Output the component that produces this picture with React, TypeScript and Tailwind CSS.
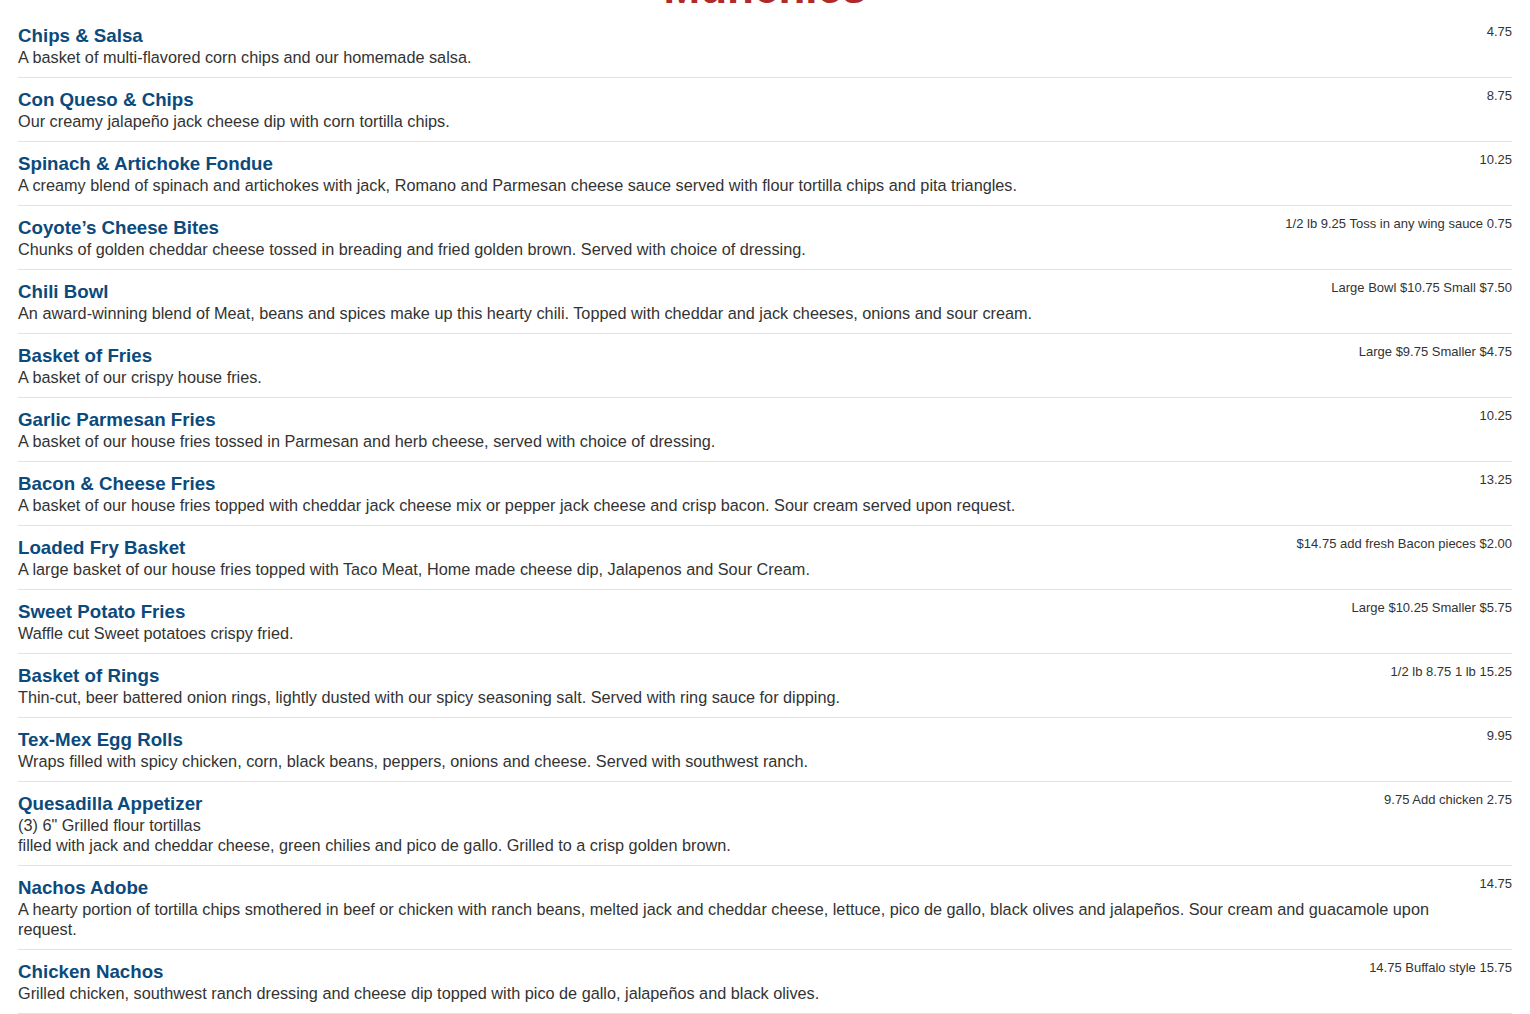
const items: { name: string; desc: string[]; price: string }[] = [
  { name: "Chips & Salsa", desc: ["A basket of multi-flavored corn chips and our homemade salsa."], price: "4.75" },
  { name: "Con Queso & Chips", desc: ["Our creamy jalapeño jack cheese dip with corn tortilla chips."], price: "8.75" },
  { name: "Spinach & Artichoke Fondue", desc: ["A creamy blend of spinach and artichokes with jack, Romano and Parmesan cheese sauce served with flour tortilla chips and pita triangles."], price: "10.25" },
  { name: "Coyote’s Cheese Bites", desc: ["Chunks of golden cheddar cheese tossed in breading and fried golden brown. Served with choice of dressing."], price: "1/2 lb 9.25 Toss in any wing sauce 0.75" },
  { name: "Chili Bowl", desc: ["An award-winning blend of Meat, beans and spices make up this hearty chili. Topped with cheddar and jack cheeses, onions and sour cream."], price: "Large Bowl $10.75 Small $7.50" },
  { name: "Basket of Fries", desc: ["A basket of our crispy house fries."], price: "Large $9.75 Smaller $4.75" },
  { name: "Garlic Parmesan Fries", desc: ["A basket of our house fries tossed in Parmesan and herb cheese, served with choice of dressing."], price: "10.25" },
  { name: "Bacon & Cheese Fries", desc: ["A basket of our house fries topped with cheddar jack cheese mix or pepper jack cheese and crisp bacon. Sour cream served upon request."], price: "13.25" },
  { name: "Loaded Fry Basket", desc: ["A large basket of our house fries topped with Taco Meat, Home made cheese dip, Jalapenos and Sour Cream."], price: "$14.75 add fresh Bacon pieces $2.00" },
  { name: "Sweet Potato Fries", desc: ["Waffle cut Sweet potatoes crispy fried."], price: "Large $10.25 Smaller $5.75" },
  { name: "Basket of Rings", desc: ["Thin-cut, beer battered onion rings, lightly dusted with our spicy seasoning salt. Served with ring sauce for dipping."], price: "1/2 lb 8.75 1 lb 15.25" },
  { name: "Tex-Mex Egg Rolls", desc: ["Wraps filled with spicy chicken, corn, black beans, peppers, onions and cheese. Served with southwest ranch."], price: "9.95" },
  { name: "Quesadilla Appetizer", desc: ["(3) 6\" Grilled flour tortillas", "filled with jack and cheddar cheese, green chilies and pico de gallo. Grilled to a crisp golden brown."], price: "9.75 Add chicken 2.75" },
  { name: "Nachos Adobe", desc: ["A hearty portion of tortilla chips smothered in beef or chicken with ranch beans, melted jack and cheddar cheese, lettuce, pico de gallo, black olives and jalapeños. Sour cream and guacamole upon request."], price: "14.75" },
  { name: "Chicken Nachos", desc: ["Grilled chicken, southwest ranch dressing and cheese dip topped with pico de gallo, jalapeños and black olives."], price: "14.75 Buffalo style 15.75" },
];

export default function App() {
  return (
    <div className="h-[1014px] overflow-hidden bg-white font-['Liberation_Sans',Arial,sans-serif] text-[#333]">
      {/* page is scrolled: heading sits mostly above the fold */}
      <h2 className="mt-[-34px] text-center text-[44px] font-bold leading-[44px] text-[#b0292b]">Munchies</h2>

      <div className="px-[18px] pt-[4px]">
        {items.map((item) => (
          <div key={item.name} className="flex gap-5 border-b border-[#e2e2e2] pt-[10px] pb-[10px]">
            <div className="min-w-0 flex-1">
              <h3 className="text-[18.72px] font-bold leading-[23px] text-[#0b4a7c]">{item.name}</h3>
              {item.desc.map((line) => (
                <p key={line} className="text-[16.25px] leading-5">{line}</p>
              ))}
            </div>
            <div className="shrink-0 whitespace-nowrap text-[13px] leading-[15px]">{item.price}</div>
          </div>
        ))}
      </div>
    </div>
  );
}
